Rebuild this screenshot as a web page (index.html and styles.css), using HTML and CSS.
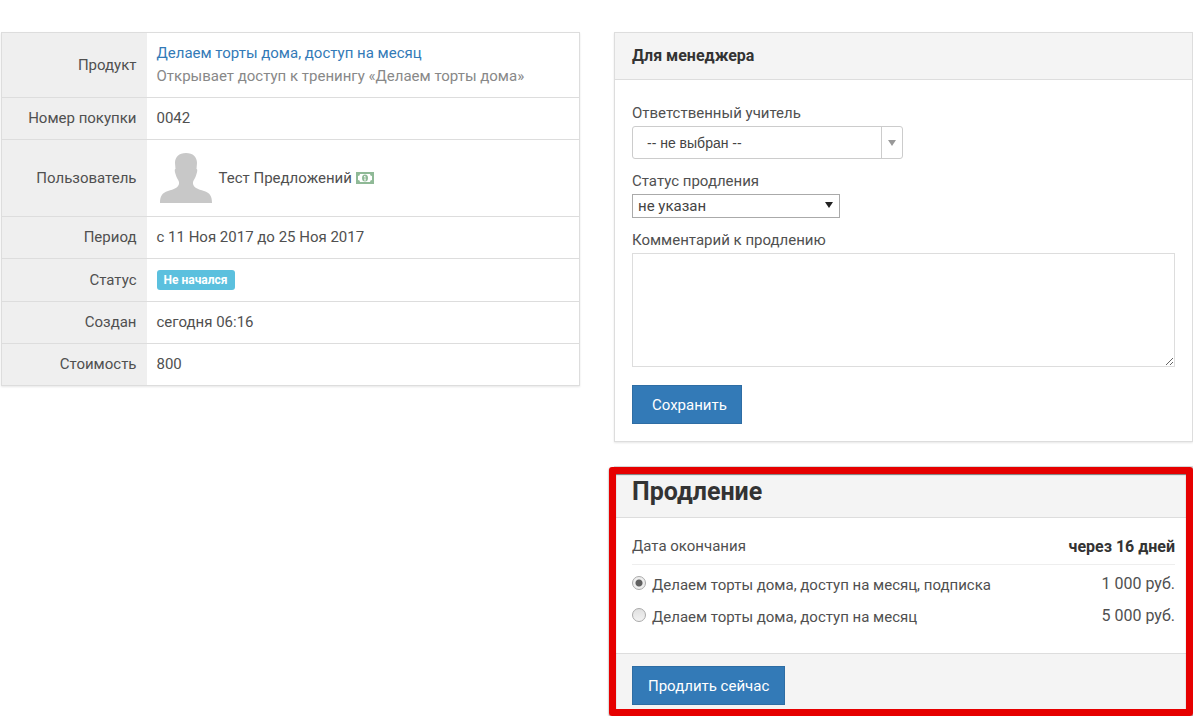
FILE: index.html
```
<!DOCTYPE html>
<html lang="ru">
<head>
    <meta charset="UTF-8">
    <meta name="viewport" content="width=device-width, initial-scale=1.0">
    <title>Покупка 0042</title>
    <link rel="stylesheet" href="styles.css">
</head>
<body>

<div class="page">
    <div class="column">
        <table class="details">
            <tr>
                <th scope="row">Продукт</th>
                <td>
                    <a href="#">Делаем торты дома, доступ на месяц</a>
                    <div class="muted">Открывает доступ к тренингу «Делаем торты дома»</div>
                </td>
            </tr>
            <tr>
                <th scope="row">Номер покупки</th>
                <td>0042</td>
            </tr>
            <tr>
                <th scope="row">Пользователь</th>
                <td>
                    <div class="user">
                        <svg class="avatar" viewBox="0 0 58 58" aria-hidden="true">
                            <path fill="#c8c8c8" d="M29 4C36 4 40 8 40 14L39.500 20C40.500 20 40.500 22 39.500 25C38.500 29 37 30 36 33L36 35C37 39 41 40 47 42C53 44 55 47 55 54L3 54C3 47 5 44 11 42C17 40 21 39 22 35L22 33C21 30 19.500 29 18.500 25C17.500 22 17.500 20 18.500 20L18 14C18 8 22 4 29 4Z"/>
                        </svg>
                        <span>Тест Предложений</span>
                        <svg class="money" viewBox="0 0 18 12" aria-hidden="true">
                            <rect width="18" height="12" fill="#8fb996"/>
                            <path fill="#fff" d="M4 2H14A2 2 0 0 0 16 4V8A2 2 0 0 0 14 10H4A2 2 0 0 0 2 8V4A2 2 0 0 0 4 2Z"/>
                            <ellipse cx="9" cy="6" rx="3" ry="3.5" fill="#8fb996"/>
                            <path fill="none" stroke="#fff" stroke-width="0.8" d="M8 5L9 4V8M8 8H10"/>
                        </svg>
                    </div>
                </td>
            </tr>
            <tr>
                <th scope="row">Период</th>
                <td>с 11 Ноя 2017 до 25 Ноя 2017</td>
            </tr>
            <tr>
                <th scope="row">Статус</th>
                <td><span class="label-info">Не начался</span></td>
            </tr>
            <tr>
                <th scope="row">Создан</th>
                <td>сегодня 06:16</td>
            </tr>
            <tr>
                <th scope="row">Стоимость</th>
                <td>800</td>
            </tr>
        </table>
    </div>

    <div class="column">
        <form class="panel">
            <div class="panel-heading">Для менеджера</div>
            <div class="panel-body manager">
                <div class="form-group">
                    <label for="teacher">Ответственный учитель</label>
                    <div class="select-box teacher">
                        <select id="teacher">
                            <option>-- не выбран --</option>
                        </select>
                        <svg class="arrow" viewBox="0 0 8 6" aria-hidden="true"><path d="M0 0H8L4 6Z"/></svg>
                    </div>
                </div>
                <div class="form-group">
                    <label for="status">Статус продления</label>
                    <div class="select-box status">
                        <select id="status">
                            <option>не указан</option>
                        </select>
                        <svg class="arrow" viewBox="0 0 8 6" aria-hidden="true"><path d="M0 0H8L4 6Z"/></svg>
                    </div>
                </div>
                <div class="form-group">
                    <label for="comment">Комментарий к продлению</label>
                    <textarea id="comment"></textarea>
                </div>
                <button class="btn btn-save" type="button">Сохранить</button>
            </div>
        </form>

        <form class="panel highlighted">
            <h3 class="panel-heading">Продление</h3>
            <div class="panel-body">
                <div class="end-date">
                    <span>Дата окончания</span>
                    <b>через 16 дней</b>
                </div>
                <div class="offer">
                    <input type="radio" name="offer" id="offer1" checked>
                    <label for="offer1">Делаем торты дома, доступ на месяц, подписка</label>
                    <span class="price">1 000 руб.</span>
                </div>
                <div class="offer">
                    <input type="radio" name="offer" id="offer2">
                    <label for="offer2">Делаем торты дома, доступ на месяц</label>
                    <span class="price">5 000 руб.</span>
                </div>
            </div>
            <div class="panel-footer">
                <button class="btn" type="button">Продлить сейчас</button>
            </div>
        </form>
    </div>
</div>

</body>
</html>
```
FILE: styles.css
```
* {
    box-sizing: border-box;
}
body {
    margin: 0;
    font-family: Roboto, "Noto Sans", sans-serif;
    font-size: 15px;
    line-height: 23px;
    color: #505050;
    background-color: #fff;
}
a {
    color: #337ab7;
    text-decoration: none;
}
.page {
    display: grid;
    grid-template-columns: 1fr 1fr;
    gap: 34px;
    align-items: start;
    padding: 32px 0 0 1px;
}

/* purchase details */
.details {
    width: 100%;
    border-collapse: collapse;
    border: 1px solid #ddd;
    box-shadow: 0 1px 2px rgba(0, 0, 0, 0.1);
}
.details tr {
    border-bottom: 1px solid #ddd;
}
.details th {
    width: 145px;
    padding: 9px 10px;
    background-color: #efefef;
    font-weight: normal;
    text-align: right;
    white-space: nowrap;
}
.details td {
    padding: 9px 10px;
}
.muted {
    color: #888;
}
.user {
    display: flex;
    align-items: center;
}
.avatar {
    width: 58px;
    height: 58px;
    margin-right: 4px;
}
.money {
    width: 18px;
    height: 12px;
    margin-left: 4px;
}
.label-info {
    display: block;
    width: fit-content;
    margin: 2px 0;
    padding: 0 7px;
    border-radius: 3px;
    background-color: #5bc0de;
    color: #fff;
    font-size: 12px;
    font-weight: bold;
    line-height: 20px;
}

/* panels */
.panel {
    margin-bottom: 24px;
    border: 1px solid #ddd;
    box-shadow: 0 1px 2px rgba(0, 0, 0, 0.1);
}
.panel-heading {
    margin: 0;
    padding: 11px 17px 12px;
    border-bottom: 1px solid #ddd;
    background-color: #f4f4f4;
    color: #333;
    font-size: 16px;
    font-weight: bold;
}
.panel-body {
    padding: 17px 17px 22px;
}
.panel-body.manager {
    padding: 22px 17px 17px;
}
.form-group {
    margin-bottom: 11px;
}
.form-group label {
    display: block;
    margin-bottom: 2px;
    line-height: 22px;
}
.select-box {
    position: relative;
}
.select-box select {
    width: 100%;
    height: 100%;
    appearance: none;
    background-color: #fff;
    color: #444;
}
.arrow {
    position: absolute;
    width: 8px;
    height: 6px;
    pointer-events: none;
}
.teacher {
    width: 271px;
    height: 33px;
}
.teacher select {
    padding: 0 14px;
    border: 1px solid #ccc;
    border-radius: 3px;
    font-family: "Liberation Sans", sans-serif;
    font-size: 14px;
}
.teacher::after {
    content: "";
    position: absolute;
    top: 1px;
    right: 21px;
    bottom: 1px;
    border-left: 1px solid #ccc;
}
.teacher .arrow {
    top: 14px;
    right: 7px;
    fill: #999;
}
.status {
    width: 208px;
    height: 24px;
}
.status select {
    padding: 0 5px;
    border: 1px solid #aaa;
    border-radius: 0;
    font-family: inherit;
    font-size: 15px;
}
.status .arrow {
    top: 8px;
    right: 7px;
    fill: #222;
}
textarea {
    display: block;
    width: 100%;
    height: 114px;
    border: 1px solid #ddd;
    font: inherit;
}
.btn {
    height: 39px;
    padding: 0 15px;
    border: 1px solid #2e6da4;
    background-color: #337ab7;
    color: #fff;
    font-family: inherit;
    font-size: 15px;
    cursor: pointer;
}
.btn:hover {
    background-color: #286090;
}
.btn-save {
    display: block;
    margin-top: 18px;
    padding: 0 14px 0 19px;
}

/* red frame over the panel */
.highlighted {
    position: relative;
    margin-bottom: 0;
}
.highlighted::after {
    content: "";
    position: absolute;
    top: 0;
    right: -1px;
    bottom: -1px;
    left: -6px;
    border: 7px solid #e60000;
    border-radius: 3px;
    box-shadow: 0 1px 2px rgba(0, 0, 0, 0.5), inset 0 1px 1px rgba(0, 0, 0, 0.5);
    pointer-events: none;
}
.highlighted .panel-heading {
    font-size: 25px;
    line-height: 27px;
}
.end-date {
    display: flex;
    justify-content: space-between;
    margin-bottom: 2px;
    padding-bottom: 6px;
    border-bottom: 1px solid #eee;
}
.end-date b {
    color: #333;
    font-size: 16px;
}
.offer {
    display: flex;
    align-items: center;
    height: 32px;
}
.offer input {
    appearance: none;
    width: 14px;
    height: 14px;
    margin: 0 6px 0 0;
    border: 1px solid #aaa;
    border-radius: 50%;
    background: linear-gradient(#e0e0e0, #f2f2f2);
}
.offer input:checked {
    background: radial-gradient(circle, #606060 3px, #eee 4px);
}
.offer label {
    padding-top: 4px;
}
.price {
    margin-left: auto;
    font-size: 16px;
}
.panel-footer {
    padding: 12px 17px 10px;
    border-top: 1px solid #ddd;
    background-color: #f4f4f4;
}
```
